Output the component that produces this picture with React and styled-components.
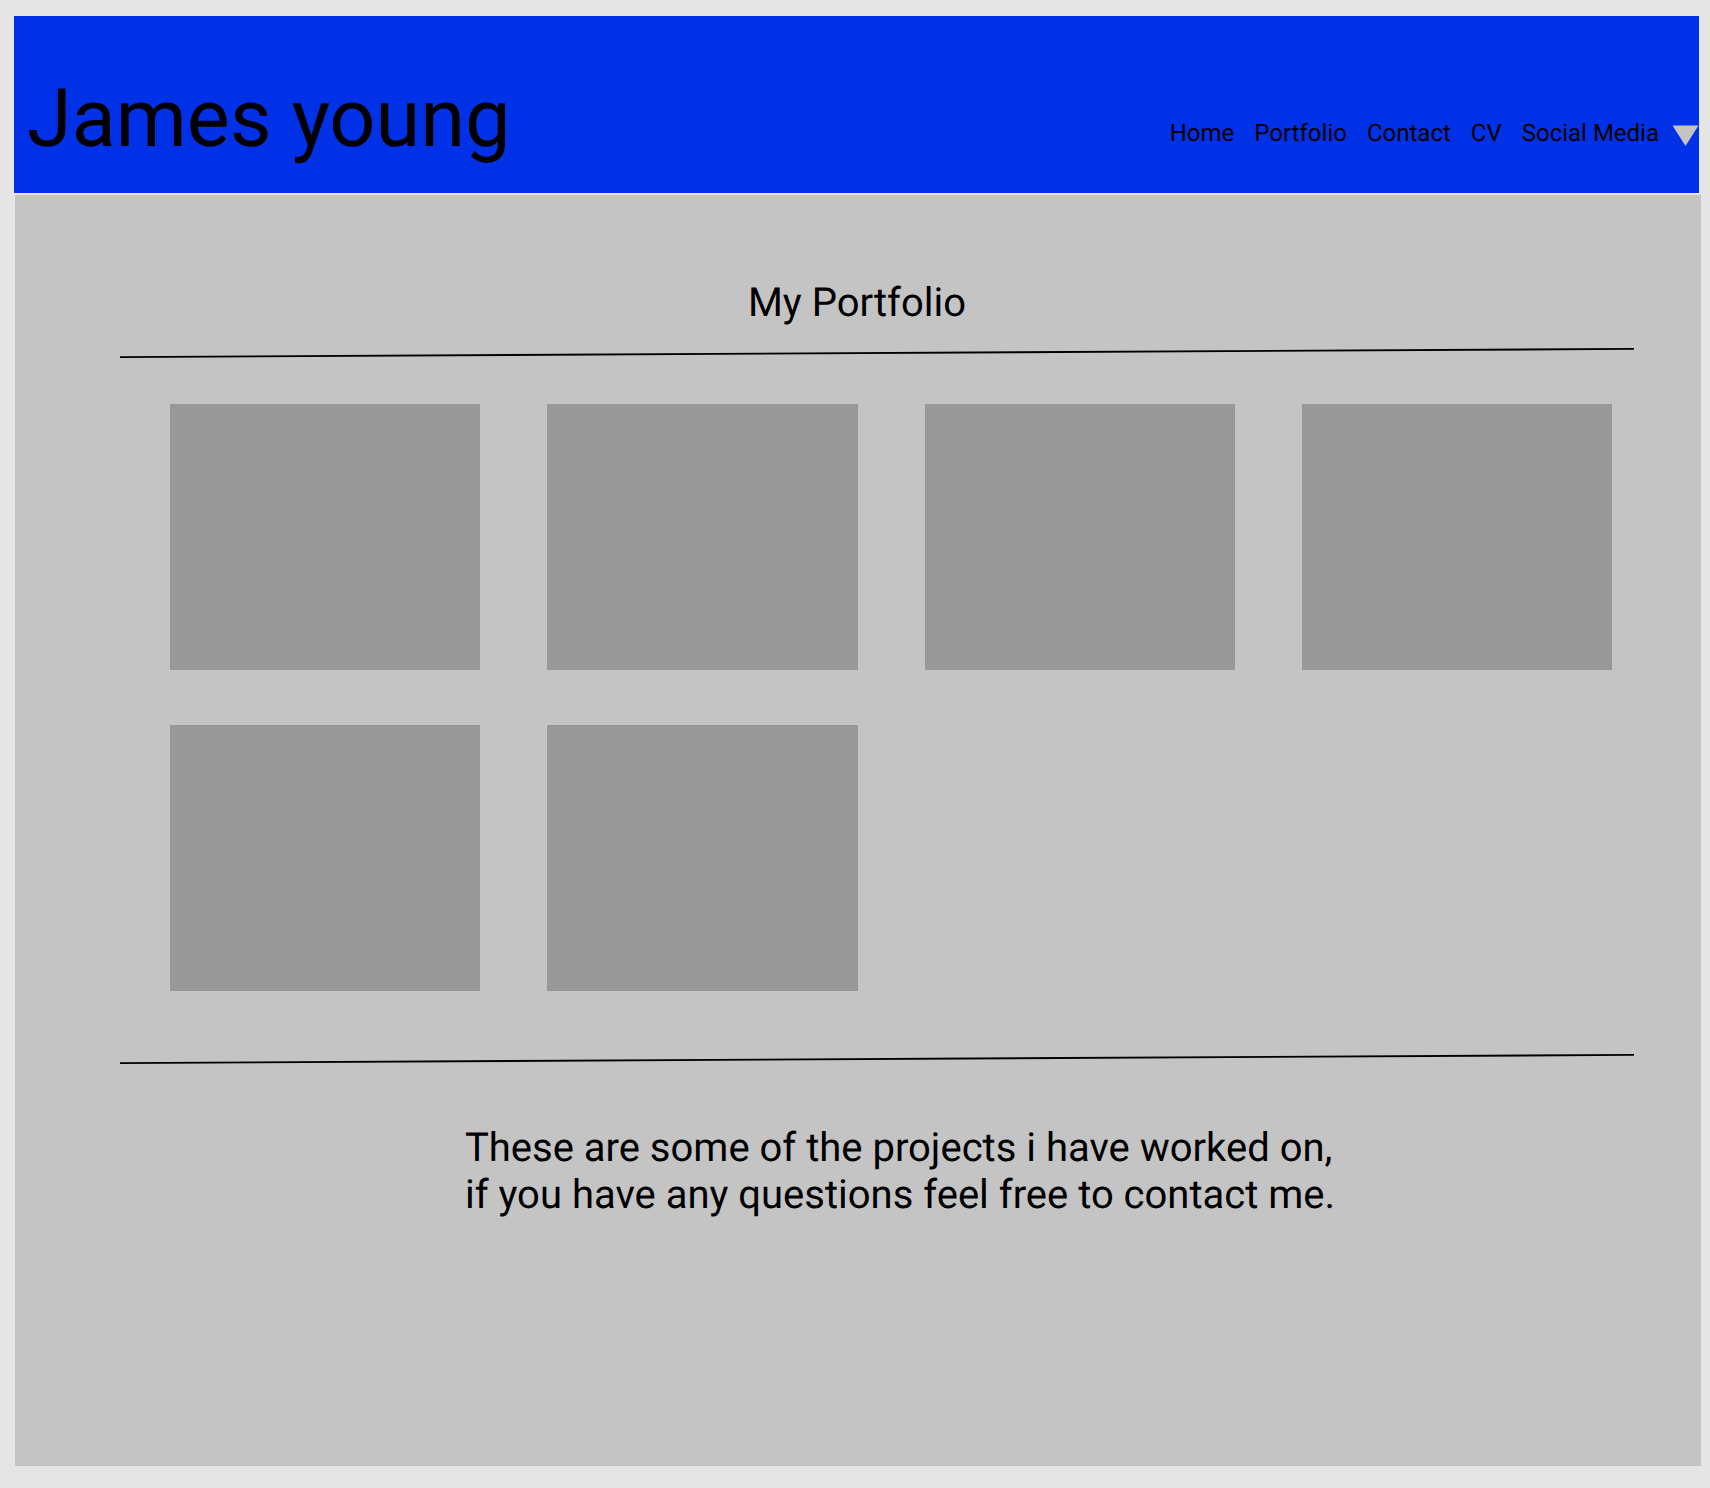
import React from "react";
import styled, { createGlobalStyle } from "styled-components";

const GlobalStyle = createGlobalStyle`
  *, *::before, *::after { box-sizing: border-box; }
  body {
    margin: 0;
    background: #e5e5e5;
    color: #000;
    font-family: Roboto, "Liberation Sans", sans-serif;
    text-rendering: geometricPrecision;
  }
`;

const Page = styled.div`
  display: flex;
  flex-direction: column;
  gap: 2px;
  padding: 16px 9px 22px 14px;
`;

const Header = styled.header`
  display: flex;
  flex-wrap: wrap;
  align-items: flex-end;
  justify-content: space-between;
  margin-right: 2px;
  padding: 56px 0 27px 13px;
  background: #0031e6;
`;

const SiteName = styled.h1`
  margin: 0;
  font-size: 81px;
  font-weight: 400;
  line-height: 94px;
`;

const Nav = styled.nav`
  display: flex;
  flex-wrap: wrap;
  gap: 20px;
  padding-bottom: 19px;
  font-size: 24px;
  line-height: 28px;
`;

const NavLink = styled.a`
  color: inherit;
  text-decoration: none;
`;

const MenuButton = styled.button`
  display: flex;
  align-items: center;
  gap: 12px;
  margin: 0;
  padding: 0;
  border: 0;
  background: none;
  color: inherit;
  font: inherit;
  text-rendering: inherit;
  cursor: pointer;
`;

const Arrow = styled.svg`
  display: block;
  width: 28px;
  height: 26px;
`;

const Main = styled.main`
  margin-left: 1px;
  padding: 84px 0 248px;
  background: #c4c4c4;
`;

const Heading = styled.h2`
  margin: 0 0 22px;
  padding-right: 2px;
  font-size: 40px;
  font-weight: 400;
  line-height: 47px;
  text-align: center;
`;

const Gallery = styled.section`
  padding: 0 67px 0 105px;
`;

const RuleSvg = styled.svg`
  display: block;
  width: 100%;
  height: 10px;
`;

const Grid = styled.ul`
  display: grid;
  grid-template-columns: repeat(4, 1fr);
  gap: 55px 67px;
  margin: 0;
  padding: 46px 22px 63px 50px;
  list-style: none;
`;

const Tile = styled.li`
  height: 266px;
  background: #989898;
`;

const Closing = styled.div`
  display: flex;
  justify-content: center;
  padding: 60px 0 0 84px;
`;

const Message = styled.p`
  margin: 0;
  font-size: 40px;
  line-height: 47px;
`;

const LINKS = ["Home", "Portfolio", "Contact", "CV"];
const PROJECTS = [1, 2, 3, 4, 5, 6];

function SlantedRule() {
  return (
    <RuleSvg viewBox="0 0 1514 10" preserveAspectRatio="none" aria-hidden="true">
      <line x1="0" y1="9.1" x2="1514" y2="0.9" stroke="#000" strokeWidth="1.8" />
    </RuleSvg>
  );
}

export default function App() {
  return (
    <>
      <GlobalStyle />
      <Page>
        <Header>
          <SiteName>James young</SiteName>
          <Nav>
            {LINKS.map((label) => (
              <NavLink key={label} href={`#${label.toLowerCase()}`}>
                {label}
              </NavLink>
            ))}
            <MenuButton type="button" aria-haspopup="true">
              Social Media
              <Arrow viewBox="0 0 28 26" aria-hidden="true">
                <path d="M1.5 5.5H27.5L14.5 26Z" fill="#c4c4c4" />
              </Arrow>
            </MenuButton>
          </Nav>
        </Header>
        <Main>
          <Heading>My Portfolio</Heading>
          <Gallery>
            <SlantedRule />
            <Grid>
              {PROJECTS.map((id) => (
                <Tile key={id} />
              ))}
            </Grid>
            <SlantedRule />
          </Gallery>
          <Closing>
            <Message>
              These are some of the projects i have worked on,
              <br />
              if you have any questions feel free to contact me.
            </Message>
          </Closing>
        </Main>
      </Page>
    </>
  );
}
